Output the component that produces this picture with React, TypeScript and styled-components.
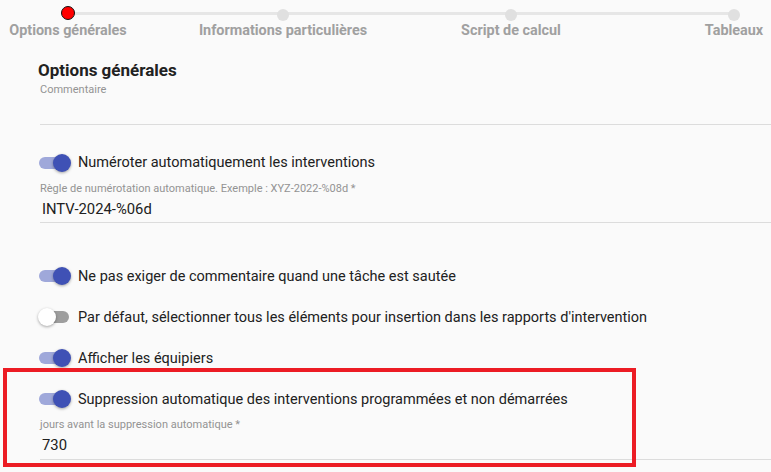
import React from 'react'
import styled, { createGlobalStyle } from 'styled-components'

const GlobalStyle = createGlobalStyle`
  html, body {
    margin: 0;
    padding: 0;
    background: #fafafa;
    font-family: Roboto, "Liberation Sans", Arial, sans-serif;
    overflow: hidden;
  }
`

type StepInfo = { label: string; width: number; offset: number; active?: boolean }

const steps: StepInfo[] = [
  { label: 'Options générales', width: 120, offset: 8, active: true },
  { label: 'Informations particulières', width: 180, offset: 65 },
  { label: 'Script de calcul', width: 120, offset: 78 },
  { label: 'Tableaux', width: 60, offset: 133 },
]

type ToggleInfo = { label: string; on: boolean }

const toggles: ToggleInfo[] = [
  { label: 'Ne pas exiger de commentaire quand une tâche est sautée', on: true },
  { label: 'Par défaut, sélectionner tous les éléments pour insertion dans les rapports d\'intervention', on: false },
  { label: 'Afficher les équipiers', on: true },
]

function Toggle({ on, label }: ToggleInfo) {
  return (
    <SwitchRow>
      <Switch>
        <Track $on={on} />
        <Thumb $on={on} />
      </Switch>
      <SwitchLabel>{label}</SwitchLabel>
    </SwitchRow>
  )
}

function TextField({ label, value }: { label: string; value?: string }) {
  return (
    <Field>
      <FieldLabel>{label}</FieldLabel>
      <FieldValue>{value}</FieldValue>
    </Field>
  )
}

export default function App() {
  return (
    <>
      <GlobalStyle />
      <Page>
        <Stepper>
          {steps.map((s) => (
            <Step key={s.label} $width={s.width} $offset={s.offset}>
              <DotSlot>
                <Dot $active={!!s.active} />
              </DotSlot>
              <StepLabel>{s.label}</StepLabel>
            </Step>
          ))}
        </Stepper>

        <Form>
          <SectionTitle>Options générales</SectionTitle>
          <TextField label="Commentaire" />

          <FirstToggle>
            <Toggle on label="Numéroter automatiquement les interventions" />
          </FirstToggle>
          <TextField label="Règle de numérotation automatique. Exemple : XYZ-2022-%08d *" value="INTV-2024-%06d" />

          <ToggleList>
            {toggles.map((t) => (
              <Toggle key={t.label} {...t} />
            ))}
          </ToggleList>

          <Highlighted>
            <Toggle on label="Suppression automatique des interventions programmées et non démarrées" />
            <TextField label="jours avant la suppression automatique *" value="730" />
          </Highlighted>
        </Form>
      </Page>
    </>
  )
}

const Page = styled.div`
  width: 771px;
  height: 472px;
  overflow: hidden;
`

const Stepper = styled.div`
  position: relative;
  display: flex;
  height: 40px;

  &::before {
    content: '';
    position: absolute;
    left: 68px;
    width: 666px;
    top: 12px;
    height: 3px;
    background: #e6e6e6;
  }
`

const Step = styled.div<{ $width: number; $offset: number }>`
  position: relative;
  width: ${(p) => p.$width}px;
  margin-left: ${(p) => p.$offset}px;
  flex: none;
  display: flex;
  flex-direction: column;
  align-items: center;
`

const DotSlot = styled.div`
  height: 22.5px;
  display: flex;
  justify-content: center;
`

const Dot = styled.div<{ $active: boolean }>`
  box-sizing: border-box;
  width: ${(p) => (p.$active ? 14 : 12)}px;
  height: ${(p) => (p.$active ? 14 : 12)}px;
  margin-top: ${(p) => (p.$active ? 6 : 9)}px;
  border-radius: 50%;
  background: ${(p) => (p.$active ? '#ff0000' : '#e0e0e0')};
  border: ${(p) => (p.$active ? '1px solid #111' : 'none')};
`

const StepLabel = styled.div`
  white-space: nowrap;
  font-size: 14.4px;
  line-height: 16px;
  font-weight: 700;
  color: #a0a0a0;
`

const Form = styled.div`
  padding-left: 40px;
  padding-top: 20px;
  display: flex;
  flex-direction: column;
`

const SectionTitle = styled.div`
  margin-left: -2px;
  font-size: 17px;
  line-height: 20px;
  font-weight: 700;
  color: #212121;
`

const Field = styled.div`
  display: flex;
  flex-direction: column;
  border-bottom: 1px solid #dcdcdc;
`

const FieldLabel = styled.div`
  margin-top: 3px;
  font-size: 11px;
  line-height: 13px;
  color: #939393;
  white-space: nowrap;
`

const FieldValue = styled.div`
  padding: 4px 0 3.5px 2px;
  height: 20px;
  font-size: 14.8px;
  line-height: 20px;
  color: #212121;
`

const FirstToggle = styled.div`
  margin-top: 22px;
`

const ToggleList = styled.div`
  margin-top: 37px;
  display: flex;
  flex-direction: column;
  gap: 9px;
  margin-bottom: 9px;
`

const SwitchRow = styled.div`
  height: 32px;
  display: flex;
  align-items: center;
  gap: 7px;
`

const Switch = styled.div`
  position: relative;
  width: 32px;
  height: 18px;
  margin-left: -1px;
  flex: none;
`

const Track = styled.div<{ $on: boolean }>`
  position: absolute;
  left: 0;
  top: 3px;
  width: 30px;
  height: 12px;
  border-radius: 6px;
  background: ${(p) => (p.$on ? '#9fa8da' : '#9e9e9e')};
`

const Thumb = styled.div<{ $on: boolean }>`
  position: absolute;
  top: 0;
  left: ${(p) => (p.$on ? 14 : -1)}px;
  width: 18px;
  height: 18px;
  border-radius: 50%;
  background: ${(p) => (p.$on ? '#3f51b5' : '#ffffff')};
  box-shadow: 0 1px 3px rgba(0, 0, 0, 0.35);
`

const SwitchLabel = styled.div`
  font-size: 14.5px;
  color: #212121;
  white-space: nowrap;
`

const Highlighted = styled.div`
  position: relative;

  &::after {
    content: '';
    position: absolute;
    left: -37px;
    top: -15px;
    width: 633px;
    bottom: -7px;
    box-sizing: border-box;
    border: 4px solid #ec1c24;
    pointer-events: none;
  }
`
